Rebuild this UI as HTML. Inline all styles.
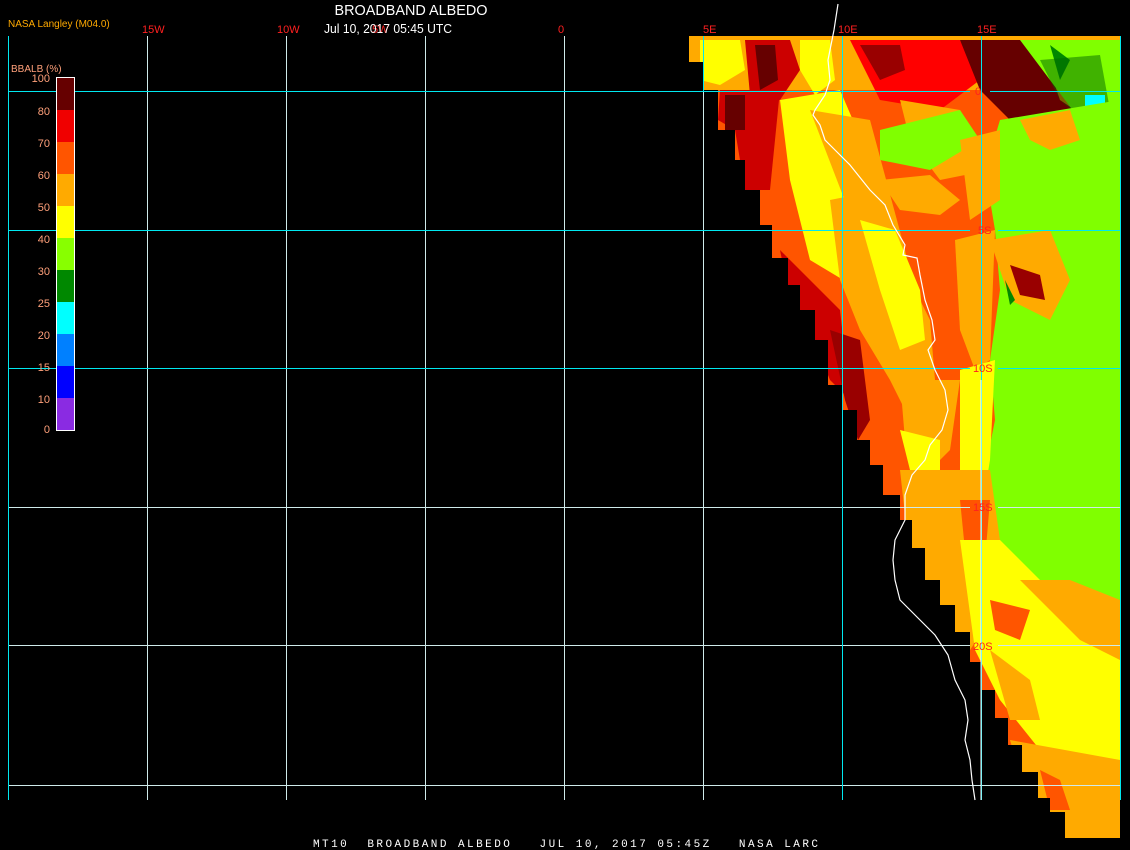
<!DOCTYPE html>
<html><head><meta charset="utf-8"><style>
html,body{margin:0;padding:0;background:#000;}
body{width:1130px;height:850px;overflow:hidden;position:relative;font-family:"Liberation Sans",sans-serif;}
svg{position:absolute;left:0;top:0;}
</style></head><body>
<svg width="1130" height="850" viewBox="0 0 1130 850">
<defs>
<clipPath id="land">
<polygon points="689,36 1120,36 1120,838 1065,838 1065,812 1050,812 1050,798 1038,798 1038,772 1022,772 1022,745 1008,745 1008,718 995,718 995,690 982,690 982,662 970,662 970,632 955,632 955,605 940,605 940,580 925,580 925,548 912,548 912,520 900,520 900,495 883,495 883,465 870,465 870,440 857,440 857,410 843,410 843,385 828,385 828,340 815,340 815,310 800,310 800,285 788,285 788,258 772,258 772,225 760,225 760,190 745,190 745,160 735,160 735,130 718,130 718,90 704,90 704,62 689,62"/>
</clipPath>
</defs>
<g clip-path="url(#land)">
<rect x="680" y="30" width="450" height="820" fill="#ff5500"/>
<rect x="680" y="30" width="450" height="60" fill="#ffaa00"/>
<polygon points="700,40 740,40 745,70 720,85 700,80" fill="#ffff00"/>
<polygon points="745,40 790,40 800,70 780,100 750,95" fill="#cc0000"/>
<polygon points="755,45 775,45 778,80 760,90" fill="#660000"/>
<polygon points="800,40 830,40 835,80 815,95 800,70" fill="#ffff00"/>
<polygon points="780,100 840,90 870,160 880,240 860,290 810,260 790,180" fill="#ffff00"/>
<polygon points="810,110 870,120 905,250 920,320 900,380 880,300 860,240" fill="#ffaa00"/>
<polygon points="850,40 960,40 980,80 940,110 880,100" fill="#ff0000"/>
<polygon points="860,45 900,45 905,70 880,80" fill="#990000"/>
<polygon points="900,100 960,110 990,170 940,180 910,140" fill="#ffaa00"/>
<polygon points="880,130 960,110 980,140 930,170 880,160" fill="#80ff00"/>
<polygon points="880,180 930,175 960,200 940,215 900,210" fill="#ffaa00"/>
<polygon points="960,40 1040,40 1060,100 1090,120 1060,140 1010,120 980,90" fill="#660000"/>
<polygon points="1020,40 1120,40 1120,110 1080,120 1050,80" fill="#80ff00"/>
<polygon points="1050,45 1070,60 1060,80" fill="#008800"/>
<polygon points="1040,60 1100,55 1110,110 1090,125 1060,100" fill="#006600" opacity="0.5"/>
<rect x="1085" y="95" width="20" height="12" fill="#00ffff"/>
<polygon points="720,90 780,90 770,190 745,190 735,130 718,120" fill="#cc0000"/>
<polygon points="725,95 745,95 745,130 725,130" fill="#660000"/>
<polygon points="1000,120 1120,100 1120,660 1080,640 1020,600 990,540 985,470 995,420 990,360 1000,290 995,230 985,170" fill="#80ff00"/>
<polygon points="960,140 1000,130 1000,200 970,220" fill="#ffaa00"/>
<polygon points="1020,120 1070,110 1080,140 1050,150 1030,140" fill="#ffaa00"/>
<polygon points="990,240 1050,230 1070,280 1050,320 1010,300" fill="#ffaa00"/>
<polygon points="1010,265 1040,275 1045,300 1020,295" fill="#990000"/>
<polygon points="1005,280 1015,300 1010,305" fill="#008800"/>
<polygon points="955,240 995,230 990,360 975,370 960,330" fill="#ffaa00"/>
<polygon points="960,370 995,360 990,460 980,520 960,500" fill="#ffff00"/>
<polygon points="830,200 880,190 900,260 930,320 935,380 910,420 890,380 860,330 840,280" fill="#ffaa00"/>
<polygon points="860,220 895,230 920,290 925,340 900,350 880,290" fill="#ffff00"/>
<polygon points="900,380 960,380 950,450 930,470 905,440" fill="#ffaa00"/>
<polygon points="900,430 940,440 940,470 915,490" fill="#ffff00"/>
<polygon points="780,250 840,310 850,400 830,380 810,330 790,300" fill="#cc0000"/>
<polygon points="830,330 860,340 870,420 858,440 845,400" fill="#990000"/>
<polygon points="900,470 990,470 1000,540 990,620 970,650 940,620 910,560" fill="#ffaa00"/>
<polygon points="960,500 990,500 985,560 965,550" fill="#ff5500"/>
<polygon points="960,540 1000,540 1040,580 1090,630 1120,650 1120,780 1080,770 1040,750 1000,700 975,650" fill="#ffff00"/>
<polygon points="1020,580 1070,580 1120,600 1120,660 1080,640" fill="#ffaa00"/>
<polygon points="990,600 1030,610 1020,640 995,630" fill="#ff5500"/>
<polygon points="990,650 1030,680 1040,720 1010,720" fill="#ffaa00"/>
<polygon points="1010,740 1120,760 1120,840 1040,840" fill="#ffaa00"/>
<polygon points="1040,770 1060,780 1070,810 1050,810" fill="#ff5500"/>
</g>
<g stroke="#cfeaea" stroke-width="1">
<line x1="147.5" y1="36" x2="147.5" y2="800"/>
<line x1="286.5" y1="36" x2="286.5" y2="800"/>
<line x1="425.5" y1="36" x2="425.5" y2="800"/>
<line x1="564.5" y1="36" x2="564.5" y2="800"/>
<line x1="703.5" y1="90" x2="703.5" y2="800"/>
<line x1="8" y1="507.5" x2="970" y2="507.5"/><line x1="998" y1="507.5" x2="1120" y2="507.5"/>
<line x1="8" y1="645.5" x2="970" y2="645.5"/><line x1="998" y1="645.5" x2="1120" y2="645.5"/>
<line x1="8" y1="785.5" x2="1120" y2="785.5"/>
</g>
<g stroke="#00e8f0" stroke-width="1">
<line x1="8.5" y1="36" x2="8.5" y2="800"/>
<line x1="703.5" y1="36" x2="703.5" y2="92"/>
<line x1="842.5" y1="36" x2="842.5" y2="800"/>
<line x1="981.5" y1="36" x2="981.5" y2="800"/>
<line x1="1120.5" y1="36" x2="1120.5" y2="800"/>
<line x1="8" y1="91.5" x2="970" y2="91.5"/><line x1="990" y1="91.5" x2="1120" y2="91.5"/>
<line x1="8" y1="230.5" x2="970" y2="230.5"/><line x1="998" y1="230.5" x2="1120" y2="230.5"/>
<line x1="8" y1="368.5" x2="970" y2="368.5"/><line x1="998" y1="368.5" x2="1120" y2="368.5"/>
</g>
<polyline fill="none" stroke="#fff" stroke-width="1.2" points="838,4 834,30 828,60 830,80 825,95 815,110 813,115 820,125 825,140 835,150 850,165 870,190 885,205 893,225 905,245 903,255 917,258 920,275 925,300 932,320 935,340 928,350 935,370 945,390 948,410 942,430 930,445 925,460 912,475 905,495 905,520 895,540 893,560 895,580 900,600 915,615 935,635 948,655 955,680 965,700 968,720 965,740 970,760 972,780 975,800"/>
<polyline fill="none" stroke="#fff" stroke-width="1" points="981,380 981,800"/>
<g>
<rect x="56" y="77" width="18" height="33" fill="#660000"/>
<rect x="56" y="110" width="18" height="32" fill="#f00000"/>
<rect x="56" y="142" width="18" height="32" fill="#ff5500"/>
<rect x="56" y="174" width="18" height="32" fill="#ffaa00"/>
<rect x="56" y="206" width="18" height="32" fill="#ffff00"/>
<rect x="56" y="238" width="18" height="32" fill="#88ff00"/>
<rect x="56" y="270" width="18" height="32" fill="#008800"/>
<rect x="56" y="302" width="18" height="32" fill="#00ffff"/>
<rect x="56" y="334" width="18" height="32" fill="#0080ff"/>
<rect x="56" y="366" width="18" height="32" fill="#0000ff"/>
<rect x="56" y="398" width="18" height="32" fill="#8a2be2"/>
<rect x="56.5" y="77.5" width="18" height="353" fill="none" stroke="#fff" stroke-width="1"/>
</g>
<g font-family="Liberation Sans, sans-serif" font-size="11" fill="#ffa07a" text-anchor="end">
<text x="50" y="82">100</text><text x="50" y="115">80</text><text x="50" y="147">70</text><text x="50" y="179">60</text><text x="50" y="211">50</text><text x="50" y="243">40</text><text x="50" y="275">30</text><text x="50" y="307">25</text><text x="50" y="339">20</text><text x="50" y="371">15</text><text x="50" y="403">10</text><text x="50" y="433">0</text>
</g>
<text x="11" y="72" font-family="Liberation Sans, sans-serif" font-size="10" fill="#ffa07a">BBALB (%)</text>
<text x="8" y="27" font-family="Liberation Sans, sans-serif" font-size="10" fill="#ffaa00">NASA Langley (M04.0)</text>
<g font-family="Liberation Sans, sans-serif" font-size="11" fill="#ff2020">
<text x="142" y="33">15W</text><text x="277" y="33">10W</text><text x="372" y="33">5W</text><text x="558" y="33">0</text>
<text x="703" y="33">5E</text><text x="838" y="33">10E</text><text x="977" y="33">15E</text>
<text x="975" y="95">0</text><text x="978" y="234">5S</text><text x="973" y="372">10S</text><text x="973" y="511">15S</text><text x="973" y="650">20S</text>
</g>
<text x="411" y="15" font-family="Liberation Sans, sans-serif" font-size="15" fill="#fff" text-anchor="middle" textLength="153" lengthAdjust="spacingAndGlyphs">BROADBAND ALBEDO</text>
<text x="388" y="33" font-family="Liberation Sans, sans-serif" font-size="13" fill="#fff" text-anchor="middle" textLength="128" lengthAdjust="spacingAndGlyphs">Jul 10, 2017 05:45 UTC</text>
<text x="313" y="847" font-family="Liberation Mono, monospace" font-size="11" fill="#fff" textLength="505" lengthAdjust="spacing" xml:space="preserve">MT10  BROADBAND ALBEDO   JUL 10, 2017 05:45Z   NASA LARC</text>
</svg>
</body></html>
